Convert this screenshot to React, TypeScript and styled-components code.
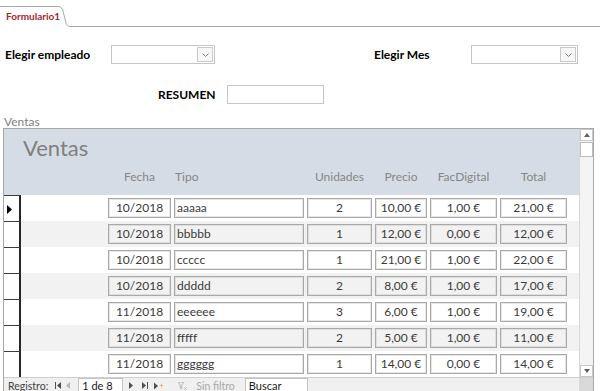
import React from 'react';
import styled, { createGlobalStyle } from 'styled-components';

const Global = createGlobalStyle`
  html, body { margin: 0; padding: 0; background: #fff; }
  body { font-family: Lato, "Open Sans", "Liberation Sans", sans-serif; }
  * { box-sizing: border-box; }
`;

const Page = styled.div`
  width: 600px;
  height: 391px;
  overflow: hidden;
  display: flex;
  flex-direction: column;
  background: #fff;
`;

const TabStrip = styled.div`
  display: flex;
  height: 27px;
  flex: none;
`;

const Tab = styled.div`
  margin-top: 6px;
  width: 56px;
  height: 21px;
  border-top: 1px solid #a8a8a8;
  font-size: 10px;
  font-weight: 700;
  color: #a4282d;
  padding: 3px 0 0 6px;
  white-space: nowrap;
`;

const TabEar = styled.svg`
  margin-top: 6px;
  flex: none;
  display: block;
`;

const TabRest = styled.div`
  flex: 1;
  border-bottom: 1px solid #a8a8a8;
`;

const FormArea = styled.div`
  padding: 18px 0 0 5px;
  display: flex;
  flex-direction: column;
`;

const ControlRow = styled.div<{ $indent?: number; $gap?: number }>`
  display: flex;
  align-items: center;
  height: 19px;
  padding-left: ${p => p.$indent ?? 0}px;
  margin-top: ${p => p.$gap ?? 0}px;
`;

const Label = styled.div<{ $w: number; $ml?: number }>`
  width: ${p => p.$w}px;
  margin-left: ${p => p.$ml ?? 0}px;
  font-size: 12px;
  font-weight: 700;
  color: #000;
  white-space: nowrap;
`;

const Combo = styled.div<{ $w: number }>`
  width: ${p => p.$w}px;
  height: 19px;
  border: 1px solid #c6c6c6;
  background: #fff;
  display: flex;
  justify-content: flex-end;
  align-items: center;
  padding-right: 1px;
`;

const ComboButton = styled.div`
  width: 16px;
  height: 15px;
  border: 1px solid #c9c9c9;
  background: #f7f7f7;
  display: flex;
  align-items: center;
  justify-content: center;
`;

const TextBox = styled.div<{ $w: number }>`
  width: ${p => p.$w}px;
  height: 19px;
  border: 1px solid #c6c6c6;
  background: #fff;
`;

const SubCaption = styled.div`
  margin: 11px 0 0 4px;
  font-size: 12px;
  line-height: 13px;
  color: #7f7f7f;
`;

const Subform = styled.div`
  margin-left: 3px;
  width: 591px;
  flex: none;
  border: 1px solid #a8a8a8;
  border-bottom: none;
  display: flex;
  flex-direction: column;
`;

const SubBody = styled.div`
  display: flex;
  height: 248px;
`;

const SubMain = styled.div`
  width: 575px;
  display: flex;
  flex-direction: column;
`;

const SubHeader = styled.div`
  height: 66px;
  background: #d6dce5;
  display: flex;
  flex-direction: column;
`;

const Title = styled.div`
  font-size: 22px;
  line-height: 26px;
  color: #808080;
  padding: 6px 0 0 19px;
`;

const FieldGrid = styled.div`
  display: grid;
  grid-template-columns: 63px 130px 65px 52px 67px 67px;
  column-gap: 3px;
`;

const HeadRow = styled(FieldGrid)`
  margin-top: 8px;
  padding-left: 104px;
`;

const HeadCell = styled.div<{ $left?: boolean }>`
  font-size: 12px;
  line-height: 16px;
  color: #868686;
  text-align: ${p => (p.$left ? 'left' : 'center')};
  padding-left: ${p => (p.$left ? 1 : 0)}px;
  white-space: nowrap;
`;

const Row = styled.div`
  display: flex;
  height: 26px;
`;

const Selector = styled.div`
  width: 17px;
  height: 26px;
  border-top: 1px solid #3c3c3c;
  border-right: 2px solid #262626;
  background: #fff;
  padding: 2px 0 0 3px;
`;

const RowBody = styled(FieldGrid)<{ $alt: boolean }>`
  flex: 1;
  background: ${p => (p.$alt ? '#f2f2f2' : '#fff')};
  padding: 3px 0 0 87px;
`;

const Field = styled.div<{ $left?: boolean; $alt: boolean }>`
  height: 20px;
  border: 1px solid #a9a9a9;
  box-shadow: inset 0 0 0 1px ${p => (p.$alt ? '#dedede' : '#e6e6e6')};
  background: ${p => (p.$alt ? '#f2f2f2' : '#fff')};
  font-size: 12px;
  line-height: 18px;
  color: #3a3a3a;
  text-align: ${p => (p.$left ? 'left' : 'center')};
  padding: 0 2px;
  white-space: nowrap;
  overflow: hidden;
`;

const ScrollBar = styled.div`
  width: 14px;
  background: #f4f4f4;
  border-left: 1px solid #d8d8d8;
  display: flex;
  flex-direction: column;
`;

const ScrollButton = styled.div`
  height: 12px;
  background: #fff;
  border: 1px solid #c8c8c8;
  display: flex;
  align-items: center;
  justify-content: center;
`;

const ScrollThumb = styled.div`
  height: 15px;
  background: #fff;
  border: 1px solid #bdbdbd;
  margin-top: 1px;
`;

const ScrollTrack = styled.div`
  flex: 1;
`;

const NavBar = styled.div`
  display: flex;
  height: 18px;
  border-top: 1px solid #cfcfcf;
`;

const NavMain = styled.div`
  width: 575px;
  background: #f0f0f0;
  display: flex;
  align-items: flex-start;
  font-size: 10.5px;
  line-height: 14px;
  color: #404040;
`;

const NavCorner = styled.div`
  flex: 1;
  background: #d9d9d9;
`;

const NavText = styled.div<{ $ml?: number; $muted?: boolean }>`
  margin-left: ${p => p.$ml ?? 0}px;
  color: ${p => (p.$muted ? '#a8a8a8' : '#404040')};
  white-space: nowrap;
  padding-top: 1px;
`;

const NavIcon = styled.svg<{ $ml: number }>`
  margin-left: ${p => p.$ml}px;
  margin-top: 4px;
  display: block;
  flex: none;
`;

const NavBox = styled.div<{ $w: number; $ml: number }>`
  width: ${p => p.$w}px;
  margin-left: ${p => p.$ml}px;
  height: 16px;
  background: #fff;
  border: 1px solid #c4c4c4;
  border-bottom: none;
  font-size: 11px;
  line-height: 14px;
  color: #1a1a1a;
  padding-left: 3px;
  white-space: nowrap;
`;

const Chevron = () => (
  <svg width="7" height="4" viewBox="0 0 7 4">
    <path d="M0.5 0.5 L3.5 3.5 L6.5 0.5" fill="none" stroke="#7a7a7a" strokeWidth="1" />
  </svg>
);

type Rec = [string, string, string, string, string, string];
const rows: Rec[] = [
  ['10/2018', 'aaaaa', '2', '10,00 €', '1,00 €', '21,00 €'],
  ['10/2018', 'bbbbb', '1', '12,00 €', '0,00 €', '12,00 €'],
  ['10/2018', 'ccccc', '1', '21,00 €', '1,00 €', '22,00 €'],
  ['10/2018', 'ddddd', '2', '8,00 €', '1,00 €', '17,00 €'],
  ['11/2018', 'eeeeee', '3', '6,00 €', '1,00 €', '19,00 €'],
  ['11/2018', 'fffff', '2', '5,00 €', '1,00 €', '11,00 €'],
  ['11/2018', 'gggggg', '1', '14,00 €', '0,00 €', '14,00 €'],
];

const heads = ['Fecha', 'Tipo', 'Unidades', 'Precio', 'FacDigital', 'Total'];

export default function App() {
  return (
    <Page>
      <Global />
      <TabStrip>
        <Tab>Formulario1</Tab>
        <TabEar width="14" height="21" viewBox="0 0 14 21">
          <path d="M0 0.5 H2 C5 0.5 6 2 7 5 L10 17 C11 20 12 20.5 14 20.5" fill="none" stroke="#a8a8a8" strokeWidth="1" />
        </TabEar>
        <TabRest />
      </TabStrip>

      <FormArea>
        <ControlRow>
          <Label $w={106}>Elegir empleado</Label>
          <Combo $w={104}>
            <ComboButton><Chevron /></ComboButton>
          </Combo>
          <Label $w={97} $ml={159}>Elegir Mes</Label>
          <Combo $w={107}>
            <ComboButton><Chevron /></ComboButton>
          </Combo>
        </ControlRow>
        <ControlRow $indent={153} $gap={21}>
          <Label $w={69}>RESUMEN</Label>
          <TextBox $w={97} />
        </ControlRow>
      </FormArea>

      <SubCaption>Ventas</SubCaption>

      <Subform>
        <SubBody>
          <SubMain>
            <SubHeader>
              <Title>Ventas</Title>
              <HeadRow>
                {heads.map((h, i) => (
                  <HeadCell key={h} $left={i === 1}>{h}</HeadCell>
                ))}
              </HeadRow>
            </SubHeader>
            {rows.map((r, ri) => (
              <Row key={ri}>
                <Selector>
                  {ri === 0 && (
                    <svg width="6" height="9" viewBox="0 0 6 9">
                      <path d="M0 0 L5 4.5 L0 9 Z" fill="#000" />
                    </svg>
                  )}
                </Selector>
                <RowBody $alt={ri % 2 === 1}>
                  {r.map((v, ci) => (
                    <Field key={ci} $left={ci === 1} $alt={ri % 2 === 1}>{v}</Field>
                  ))}
                </RowBody>
              </Row>
            ))}
          </SubMain>
          <ScrollBar>
            <ScrollButton>
              <svg width="6" height="4" viewBox="0 0 6 4"><path d="M0 4 L3 0 L6 4 Z" fill="#606060" /></svg>
            </ScrollButton>
            <ScrollThumb />
            <ScrollTrack />
            <ScrollButton>
              <svg width="6" height="4" viewBox="0 0 6 4"><path d="M0 0 L3 4 L6 0 Z" fill="#606060" /></svg>
            </ScrollButton>
          </ScrollBar>
        </SubBody>
        <NavBar>
          <NavMain>
            <NavText $ml={4}>Registro:</NavText>
            <NavIcon $ml={7} width="6" height="7" viewBox="0 0 6 7">
              <rect x="0" y="0" width="1" height="7" fill="#505050" />
              <path d="M6 0 L2 3.5 L6 7 Z" fill="#505050" />
            </NavIcon>
            <NavIcon $ml={5} width="4" height="7" viewBox="0 0 4 7">
              <path d="M4 0 L0 3.5 L4 7 Z" fill="#b8b8b8" />
            </NavIcon>
            <NavBox $w={45} $ml={8}>1 de 8</NavBox>
            <NavIcon $ml={6} width="4" height="7" viewBox="0 0 4 7">
              <path d="M0 0 L4 3.5 L0 7 Z" fill="#505050" />
            </NavIcon>
            <NavIcon $ml={9} width="6" height="7" viewBox="0 0 6 7">
              <path d="M0 0 L4 3.5 L0 7 Z" fill="#505050" />
              <rect x="5" y="0" width="1" height="7" fill="#505050" />
            </NavIcon>
            <NavIcon $ml={6} width="10" height="8" viewBox="0 0 10 8">
              <path d="M0 0.5 L4 4 L0 7.5 Z" fill="#505050" />
              <path d="M7.5 1 L8 3 L10 3.5 L8 4 L7.5 6 L7 4 L5 3.5 L7 3 Z" fill="#f0b030" />
            </NavIcon>
            <NavIcon $ml={14} width="9" height="8" viewBox="0 0 9 8">
              <path d="M0 0 H6 L3.8 3 V7 L2.2 6 V3 Z" fill="none" stroke="#b0b0b0" strokeWidth="0.9" />
              <path d="M6 5 L9 8 M9 5 L6 8" stroke="#c0c0c0" strokeWidth="0.9" />
            </NavIcon>
            <NavText $ml={9} $muted>Sin filtro</NavText>
            <NavBox $w={63} $ml={10}>Buscar</NavBox>
          </NavMain>
          <NavCorner />
        </NavBar>
      </Subform>
    </Page>
  );
}
